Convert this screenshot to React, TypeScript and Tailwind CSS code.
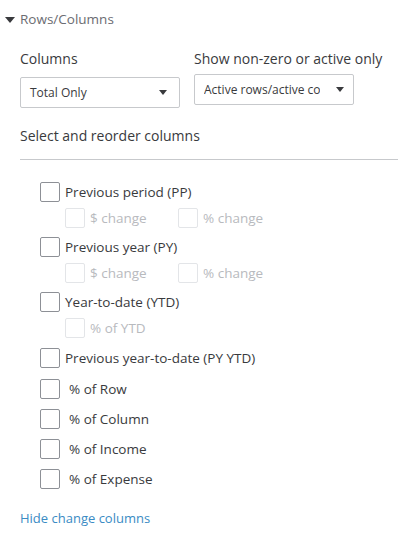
import React from "react";

const Caret = ({ className = "" }: { className?: string }) => (
  <svg width="10" height="6" viewBox="0 0 10 6" className={className}>
    <path d="M0 0h10L5 6z" fill="currentColor" />
  </svg>
);

const Box = ({ disabled = false }: { disabled?: boolean }) => (
  <span
    className={`inline-block w-[20px] h-[20px] rounded-[2px] border bg-white shrink-0 ${
      disabled ? "border-[#e3e5e8]" : "border-[#8d9096]"
    }`}
  />
);

function Main({ label, pad = false }: { label: string; pad?: boolean }) {
  return (
    <div className="flex items-center h-[20px]">
      <Box />
      <span className={`text-[#393a3d] whitespace-nowrap ${pad ? "ml-[9px]" : "ml-[5px]"}`}>{label}</span>
    </div>
  );
}

function Sub({ labels }: { labels: string[] }) {
  return (
    <div className="flex items-center h-[20px] pl-[25px]">
      {labels.map((l, i) => (
        <div key={i} className={`flex items-center ${i === 0 ? "w-[113px]" : ""}`}>
          <Box disabled />
          <span className="ml-[5px] text-[#b8babe]">{l}</span>
        </div>
      ))}
    </div>
  );
}

export default function App() {
  return (
    <div
      className="w-[398px] h-[543px] bg-white text-[13.5px] overflow-hidden"
      style={{ fontFamily: "'Open Sans', Lato, sans-serif" }}
    >
      <div className="flex items-center pt-[10px] pl-[5px] h-[29px] text-[#6b6c72]">
        <Caret className="text-[#393a3d]" />
        <span className="ml-[5px]">Rows/Columns</span>
      </div>

      <div className="flex pl-[20px] mt-[21px] text-[14px]">
        <div className="w-[174px]">
          <div className="text-[#393a3d] h-[18px] leading-[18px]">Columns</div>
          <div className="mt-[9px] w-[160px] h-[31px] border border-[#c7c9cc] rounded-[2px] flex items-center justify-between pl-[9px] pr-[12px] text-[#393a3d] text-[12px]">
            <span>Total Only</span>
            <Caret className="text-[#393a3d] w-[8px] h-[5px]" />
          </div>
        </div>
        <div>
          <div className="text-[#393a3d] h-[18px] leading-[18px] whitespace-nowrap">Show non-zero or active only</div>
          <div className="mt-[6px] w-[160px] h-[31px] border border-[#c7c9cc] rounded-[2px] flex items-center pl-[9px] text-[#393a3d] text-[12px]">
            <span className="whitespace-nowrap overflow-hidden w-[116px] shrink-0">Active rows/active columns</span>
            <Caret className="ml-[16px] text-[#393a3d] w-[8px] h-[5px]" />
          </div>
        </div>
      </div>

      <div className="pl-[20px] mt-[19px] text-[14px] text-[#393a3d] h-[18px] leading-[18px]">
        Select and reorder columns
      </div>
      <div className="ml-[20px] mt-[14px] border-t border-[#c7c9cc]" />

      <div className="pl-[40px] pt-[22px] flex flex-col">
        <Main label="Previous period (PP)" />
        <div className="mt-[6px]"><Sub labels={["$ change", "% change"]} /></div>
        <div className="mt-[9px]"><Main label="Previous year (PY)" /></div>
        <div className="mt-[6px]"><Sub labels={["$ change", "% change"]} /></div>
        <div className="mt-[9px]"><Main label="Year-to-date (YTD)" /></div>
        <div className="mt-[6px]"><Sub labels={["% of YTD"]} /></div>
        <div className="mt-[10px]"><Main label="Previous year-to-date (PY YTD)" /></div>
        <div className="mt-[11px]"><Main label="% of Row" pad /></div>
        <div className="mt-[10px]"><Main label="% of Column" pad /></div>
        <div className="mt-[10px]"><Main label="% of Income" pad /></div>
        <div className="mt-[10px]"><Main label="% of Expense" pad /></div>
      </div>

      <div className="pl-[20px] mt-[20px] text-[13px] text-[#3a8bc4]">Hide change columns</div>
    </div>
  );
}
